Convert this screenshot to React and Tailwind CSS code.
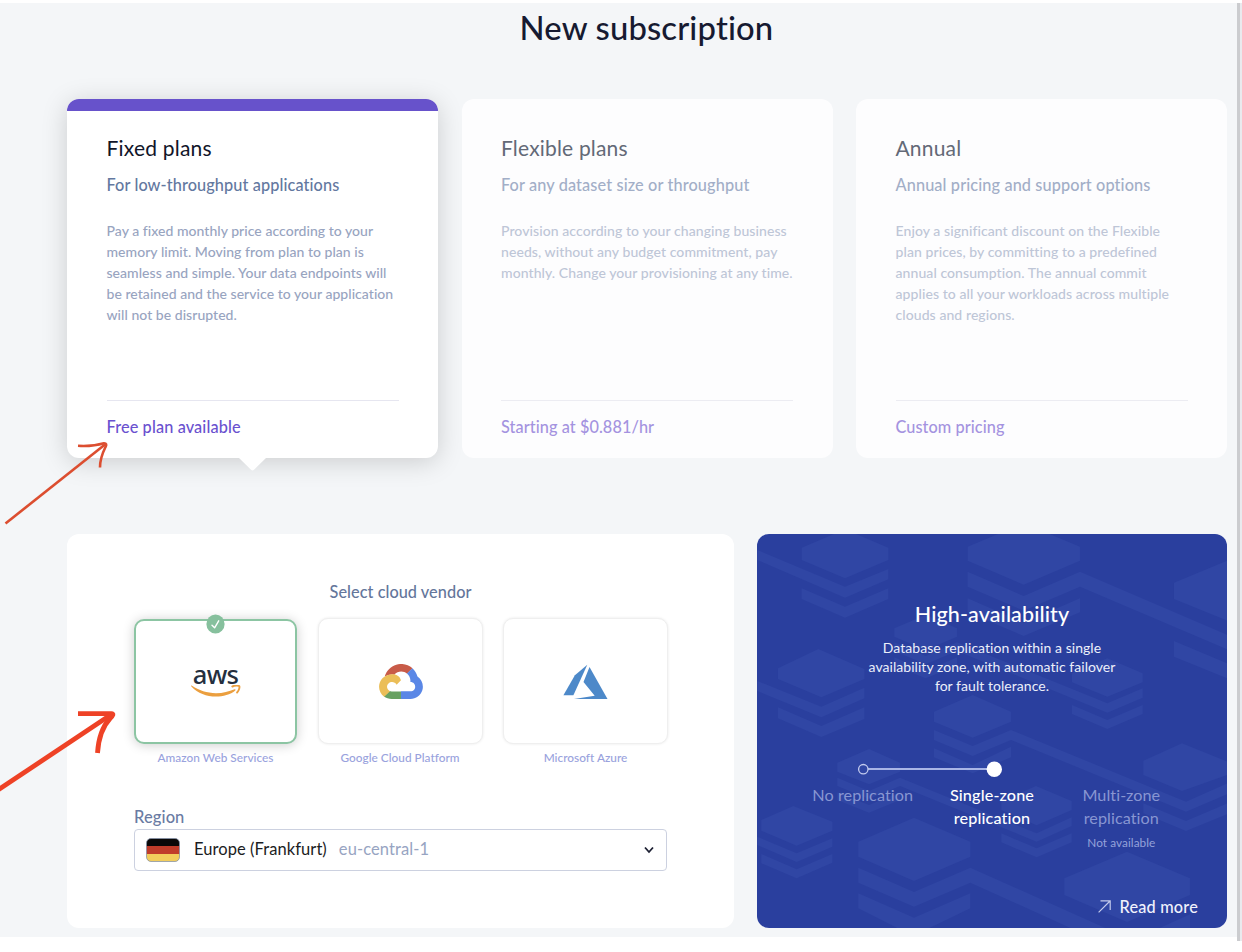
import React from "react";

const PLANS = [
  {
    title: "Fixed plans",
    subtitle: "For low-throughput applications",
    lines: [
      "Pay a fixed monthly price according to your",
      "memory limit. Moving from plan to plan is",
      "seamless and simple. Your data endpoints will",
      "be retained and the service to your application",
      "will not be disrupted.",
    ],
    price: "Free plan available",
    selected: true,
  },
  {
    title: "Flexible plans",
    subtitle: "For any dataset size or throughput",
    lines: [
      "Provision according to your changing business",
      "needs, without any budget commitment, pay",
      "monthly. Change your provisioning at any time.",
    ],
    price: "Starting at $0.881/hr",
  },
  {
    title: "Annual",
    subtitle: "Annual pricing and support options",
    lines: [
      "Enjoy a significant discount on the Flexible",
      "plan prices, by committing to a predefined",
      "annual consumption. The annual commit",
      "applies to all your workloads across multiple",
      "clouds and regions.",
    ],
    price: "Custom pricing",
  },
];

function PlanCard({ plan }) {
  const on = plan.selected;
  return (
    <article
      className={
        on
          ? "relative flex h-[359px] flex-col rounded-[12px] bg-white px-[39.5px] pb-5 pt-[35px] shadow-[0_4px_26px_rgba(0,0,0,0.17)]"
          : "relative flex h-[359px] flex-col rounded-[12px] bg-[#fdfdfe] px-[39.5px] pb-5 pt-[35px]"
      }
    >
      {on && (
        <>
          <div className="absolute inset-x-0 top-0 h-3 overflow-hidden rounded-t-[12px] bg-[#6752cb]" />
          <svg className="absolute left-[171px] top-[358px]" width="29" height="15" viewBox="0 0 29 15">
            <path d="M0 0H29L16 12.8Q14.5 14.2 13 12.8Z" fill="#fff" />
          </svg>
        </>
      )}
      <h2 className={on ? "text-[21px] leading-7 tracking-[0.2px] text-[#111529]" : "text-[21px] leading-7 tracking-[0.18px] text-[#636977]"}>
        {plan.title}
      </h2>
      <h3 className={on ? "mt-[11px] text-[16.3px] font-medium leading-6 tracking-[0.1px] text-[#6378a0]" : "mt-[11px] text-[16.3px] font-medium leading-6 tracking-[0.12px] text-[#a2aec7]"}>
        {plan.subtitle}
      </h3>
      <p className={on ? "mt-6 whitespace-nowrap text-[14px] font-medium leading-[20.9px] tracking-[0.04px] text-[#98a4bf]" : "mt-6 whitespace-nowrap text-[14px] font-medium leading-[20.9px] tracking-[0.08px] text-[#bec6d7]"}>
        {plan.lines.map((l) => (
          <span key={l} className="block">{l}</span>
        ))}
      </p>
      <div className={on ? "-mb-px mt-auto border-t border-[#e6e6f0] pt-3.5 text-[16.3px] font-medium leading-6 tracking-[0.12px] text-[#6a51cf]" : "-mb-px mt-auto border-t border-[#ececf2] pt-3.5 text-[16.3px] font-medium leading-6 tracking-[0.07px] text-[#a493e0]"}>
        {plan.price}
      </div>
    </article>
  );
}

function AwsLogo() {
  return (
    <div className="-mt-[3px] flex flex-col items-center">
      <span className="font-['Noto_Sans'] text-[25.5px] font-medium leading-[22px] tracking-[-0.7px] text-[#252f3e]">aws</span>
      <svg width="50" height="12" viewBox="0 0 50 12">
        <path d="M.6.6C8 5.6 16 8.2 25 8.2c7 0 13-1.500 18.500-3.900.9-.4 1.500.5.8 1.100C39.500 9.400 32 11.600 25 11.600 15.500 11.600 6.800 8.300.4 1.500-.2.900.1.300.6.6Z" fill="#eb9f3f" />
        <path d="M41.300 1.600c2.400-1.500 6.300-1.200 7 -.4.500.9-.3 4.400-2.200 6.300" fill="none" stroke="#eb9f3f" strokeWidth="1.900" strokeLinecap="round" />
      </svg>
    </div>
  );
}

function GoogleCloudLogo() {
  return (
    <svg className="ml-px mt-px" width="44" height="35" viewBox="5.5 14.500 117.200 93.500">
      <path fill="#c85b48" d="M80.600 40.300h.4l-.2-.2 14-14v-.3c-11.800-10.400-28.100-14-43.200-9.500C36.500 20.800 24.900 32.800 20.700 48c.2-.1.5-.2.8-.2 5.200-3.400 11.400-5.400 17.900-5.400 2.200 0 4.300.2 6.400.6.1-.1.2-.1.3-.1 9-9.900 24.200-11.100 34.600-2.600h-.1z" />
      <path fill="#5a87e6" d="M108.100 47.800c-2.300-8.500-7.100-16.200-13.800-22.100L80 39.900c6 4.900 9.500 12.300 9.300 20v2.500c16.900 0 16.900 25.200 0 25.200H63.900v20h-.1l.1.200h25.400c14.600.1 27.500-9.300 31.800-23.100 4.300-13.800-1-28.800-13-36.900z" />
      <path fill="#67a162" d="M39 107.900h25V87.700H39c-1.900 0-3.700-.4-5.400-1.100l-15.200 14.600v.2c6 4.300 13.200 6.600 20.700 6.600z" />
      <path fill="#ebbe58" d="M40.200 41.900c-14.900.1-28.100 9.300-32.900 22.800-4.800 13.600 0 28.500 11.800 37.300l15.600-14.900c-8.600-3.700-10.600-14.500-4-20.800 6.600-6.400 17.800-4.400 21.700 3.800L64 58.200C61.400 46.900 51.100 42 40.200 41.900z" />
    </svg>
  );
}

function AzureLogo() {
  return (
    <svg className="mt-px" width="45" height="35" viewBox="0 0 45 35" fill="#4d89c9">
      <path d="M24.300.8 11.900 11.300.4 31.300h10Z" />
      <path d="M26.500 3 20.500 18 31.700 31.700 11 35H44.500Z" />
    </svg>
  );
}

const VENDORS = [
  { name: "Amazon Web Services", Logo: AwsLogo, selected: true },
  { name: "Google Cloud Platform", Logo: GoogleCloudLogo },
  { name: "Microsoft Azure", Logo: AzureLogo },
];

function Vendor({ vendor }) {
  const { Logo, selected, name } = vendor;
  return (
    <div className="flex flex-col items-center">
      <div
        className={
          selected
            ? "relative flex h-[125px] w-[163px] items-center justify-center rounded-[10px] border-2 border-[#8cc5a3] bg-white shadow-[0_1px_12px_rgba(0,0,0,0.2)]"
            : "relative flex h-[126px] w-[165px] items-center justify-center rounded-[10px] border border-[#efefef] bg-white shadow-[0_0_3px_rgba(0,0,0,0.09)]"
        }
      >
        {selected && (
          <svg className="absolute left-[69.500px] top-[-7px]" width="19" height="20" viewBox="0 0 19 20">
            <ellipse cx="9.500" cy="10" rx="9.100" ry="9.600" fill="#86c09d" />
            <path d="M6 11.300 8.600 13.800 12.700 6.800" fill="none" stroke="#fff" strokeWidth="1.400" strokeLinecap="round" strokeLinejoin="round" />
          </svg>
        )}
        <Logo />
      </div>
      <span className="mt-[6px] whitespace-nowrap text-[11.8px] font-medium leading-4 tracking-[0.03px] text-[#99a2dd]">{name}</span>
    </div>
  );
}

function VendorPanel() {
  return (
    <section className="flex h-[394px] w-[667px] flex-col rounded-[12px] bg-white px-[67px] pt-[46px]">
      <h3 className="text-center text-[16.3px] font-medium leading-6 tracking-[0.05px] text-[#64769b]">Select cloud vendor</h3>
      <div className="-mr-px mt-[14px] flex items-end justify-between">
        {VENDORS.map((v) => (
          <Vendor key={v.name} vendor={v} />
        ))}
      </div>
      <label className="mt-10 text-[16.5px] font-medium leading-[23px] tracking-[0.1px] text-[#6a7ba3]">Region</label>
      <div className="flex h-[42px] items-center rounded-[4px] border border-[#ccd1e0] bg-white px-[11px]">
        <svg width="34" height="24" viewBox="0 0 34 24">
          <clipPath id="flag"><rect x=".5" y=".5" width="33" height="23" rx="4.500" /></clipPath>
          <g clipPath="url(#flag)">
            <rect width="34" height="8" fill="#0a0808" />
            <rect y="8" width="34" height="8" fill="#c03c2a" />
            <rect y="16" width="34" height="8" fill="#f2cd5c" />
          </g>
          <rect x=".5" y=".5" width="33" height="23" rx="4.500" fill="none" stroke="#8390a8" strokeOpacity=".75" />
        </svg>
        <span className="mb-0.5 ml-3.5 text-[16.5px] leading-6 tracking-[0.07px] text-[#1b1c22]">Europe (Frankfurt)</span>
        <span className="mb-0.5 ml-3 text-[16.5px] leading-6 tracking-[0.1px] text-[#97a4c2]">eu-central-1</span>
        <svg className="ml-auto" width="12" height="10" viewBox="0 0 12 10">
          <path d="M2 2.500 6 7 10 2.500" fill="none" stroke="#1d2033" strokeWidth="1.800" />
        </svg>
      </div>
    </section>
  );
}

const UPPER_SHAPES = [
  "285,28 415,83 415,120 285,175 155,120 155,83",
  "22,90 285,200 415,147 415,178 285,233 22,120",
  "155,205 285,260 415,205 415,237 285,293 155,237",
  "821,10 990,80 990,122 821,194 653,122 653,80",
  "653,155 821,228 990,155 1432,345 1432,388 990,200 821,272 653,200",
  "653,235 821,308 990,235 990,277 821,348 653,277",
  "1272,188 1432,122 1432,302 1272,237",
  "1272,363 1432,430 1432,475 1272,410",
  "527,285 621,325 621,350 527,390 433,350 433,325",
  "433,367 527,408 621,367 1072,550 1178,505 1178,533 1072,578 621,393 527,433 433,393",
  "433,412 527,453 621,412 621,437 527,475 433,437",
  "1072,415 1178,460 1178,487 1072,530 966,487 966,460",
  "966,555 1072,600 1178,555 1178,582 1072,627 966,582",
  "205,387 343,447 343,477 214,532 84,477 84,445",
  "22,483 214,560 343,503 343,535 214,592 22,513",
  "84,562 214,618 343,562 343,597 214,651 84,595",
  "668,525 783,575 783,605 668,653 552,605 552,575",
];

const LOWER_SHAPES = [
  "552,0 668,48 783,0 1308,215 1432,160 1432,192 1308,245 783,30 668,78 552,30",
  "552,55 668,105 783,50 783,82 668,130 552,82",
  "1296,40 1432,95 1432,135 1296,183 1180,135 1180,92",
  "1180,220 1308,273 1432,220 1432,252 1308,303 1180,250",
  "357,57 450,98 450,125 357,163 262,125 262,98",
  "262,143 357,183 450,143 860,310 965,262 965,288 860,335 450,168 357,207 262,168",
  "262,187 357,225 450,187 450,210 357,248 262,210",
  "858,168 965,213 965,240 860,286 754,240 754,213",
  "754,310 860,355 965,310 965,337 860,382 754,337",
  "130,228 247,275 247,302 140,347 34,302 34,270",
  "22,320 140,370 247,325 247,350 140,396 22,345",
  "34,372 140,418 247,372 247,398 140,445 34,400",
  "492,263 661,335 661,380 492,453 325,380 325,335",
  "325,413 492,486 661,413 1075,598 970,598 661,458 492,530 325,458",
  "325,490 492,563 661,490 661,535 530,598 450,598 325,535",
  "1131,365 1320,445 1320,495 1131,576 943,495 943,445",
  "1320,553 1320,598 1220,598",
];

function AvailabilityPanel() {
  return (
    <section className="relative flex h-[394px] w-[470px] flex-col overflow-hidden rounded-[12px] bg-[#2a3f9e] text-white">
      <svg className="absolute inset-0" width="470" height="394" viewBox="0 0 470 394" fill="#3046a4">
        <g transform="translate(-7 -14) scale(0.33333)">
          {UPPER_SHAPES.map((p) => <polygon key={p} points={p} />)}
        </g>
        <g transform="translate(-7 196) scale(0.33333)">
          {LOWER_SHAPES.map((p) => <polygon key={p} points={p} />)}
        </g>
      </svg>
      <div className="relative flex h-full flex-col pt-[66px]">
        <h3 className="text-center text-[21.5px] font-medium leading-7 tracking-[0.1px]">High-availability</h3>
        <p className="mt-2.5 text-center text-[14px] leading-[19.3px] tracking-[0.05px] text-[#eceffa]">
          <span className="block">Database replication within a single</span>
          <span className="block">availability zone, with automatic failover</span>
          <span className="block">for fault tolerance.</span>
        </p>
        <svg className="ml-[100px] mt-[66px]" width="146" height="16" viewBox="0 0 146 16">
          <path d="M11 8H138" stroke="#a9b5e6" strokeWidth="2" />
          <circle cx="6.300" cy="8.200" r="4.700" fill="none" stroke="#c3cbee" strokeWidth="1.300" />
          <circle cx="137.300" cy="8.200" r="7.700" fill="#fff" />
        </svg>
        <div className="mx-[41px] mt-[6px] grid grid-cols-3 text-center text-[16.2px] leading-[23px] tracking-[0.06px] text-[#8896d2]">
          <div>No replication</div>
          <div className="font-medium tracking-[0.15px] text-white">Single-zone<br />replication</div>
          <div>
            Multi-zone<br />replication
            <div className="mt-0.5 text-[11.8px] text-[#95a2da]">Not available</div>
          </div>
        </div>
        <a className="mb-[9px] mr-[29px] mt-auto flex items-center justify-end text-[16.3px] font-medium leading-6 tracking-[0.2px] text-[#f0f2fc]">
          <svg className="mr-2" width="13" height="13" viewBox="0 0 13 13">
            <path d="M.6 12.400 12 1M2.500.8H12.200V10" fill="none" stroke="#c3caec" strokeWidth="1.200" />
          </svg>
          Read more
        </a>
      </div>
    </section>
  );
}

function Arrows() {
  return (
    <svg className="pointer-events-none absolute left-0 top-0" width="130" height="800" viewBox="0 0 130 800" fill="none" strokeLinecap="butt">
      <g stroke="#dc4e30" strokeWidth="2.600">
        <path d="M5.500 523.500 105 444.500" />
        <path d="M78 445.800C90 446.500 98 445 104 443.200Q107.500 443.500 105.500 447C102 454 100 460 100 467.500" />
      </g>
      <g stroke="#ee4226" strokeWidth="4.800">
        <path d="M-2 790 112 714" />
        <path d="M78 713.700H111.500Q115 713.700 110 718.500C102 727 98.500 738 97.500 753" />
      </g>
    </svg>
  );
}

export default function App() {
  return (
    <div className="relative h-[952px] w-[1242px] overflow-hidden bg-white pt-[3px] font-[Lato,sans-serif] [font-variant-ligatures:none]">
      <div className="flex">
        <main className="h-[934px] w-[1237px] bg-[#f4f6f8] pl-[67px] pt-[5px]">
          <h1 className="-ml-0.5 w-[1163px] text-center text-[32.8px] font-medium leading-10 tracking-[0.15px] text-[#161a31]">New subscription</h1>
          <div className="mt-[51px] grid w-[1160px] grid-cols-3 gap-x-[23.5px]">
            {PLANS.map((p) => (
              <PlanCard key={p.title} plan={p} />
            ))}
          </div>
          <div className="mt-[75.5px] flex w-[1160px] justify-between">
            <VendorPanel />
            <AvailabilityPanel />
          </div>
        </main>
        <div className="h-[938px] w-[5px] border-l-[3px] border-[#cbcccf] bg-[#e9eaee]" />
      </div>
      <Arrows />
    </div>
  );
}
